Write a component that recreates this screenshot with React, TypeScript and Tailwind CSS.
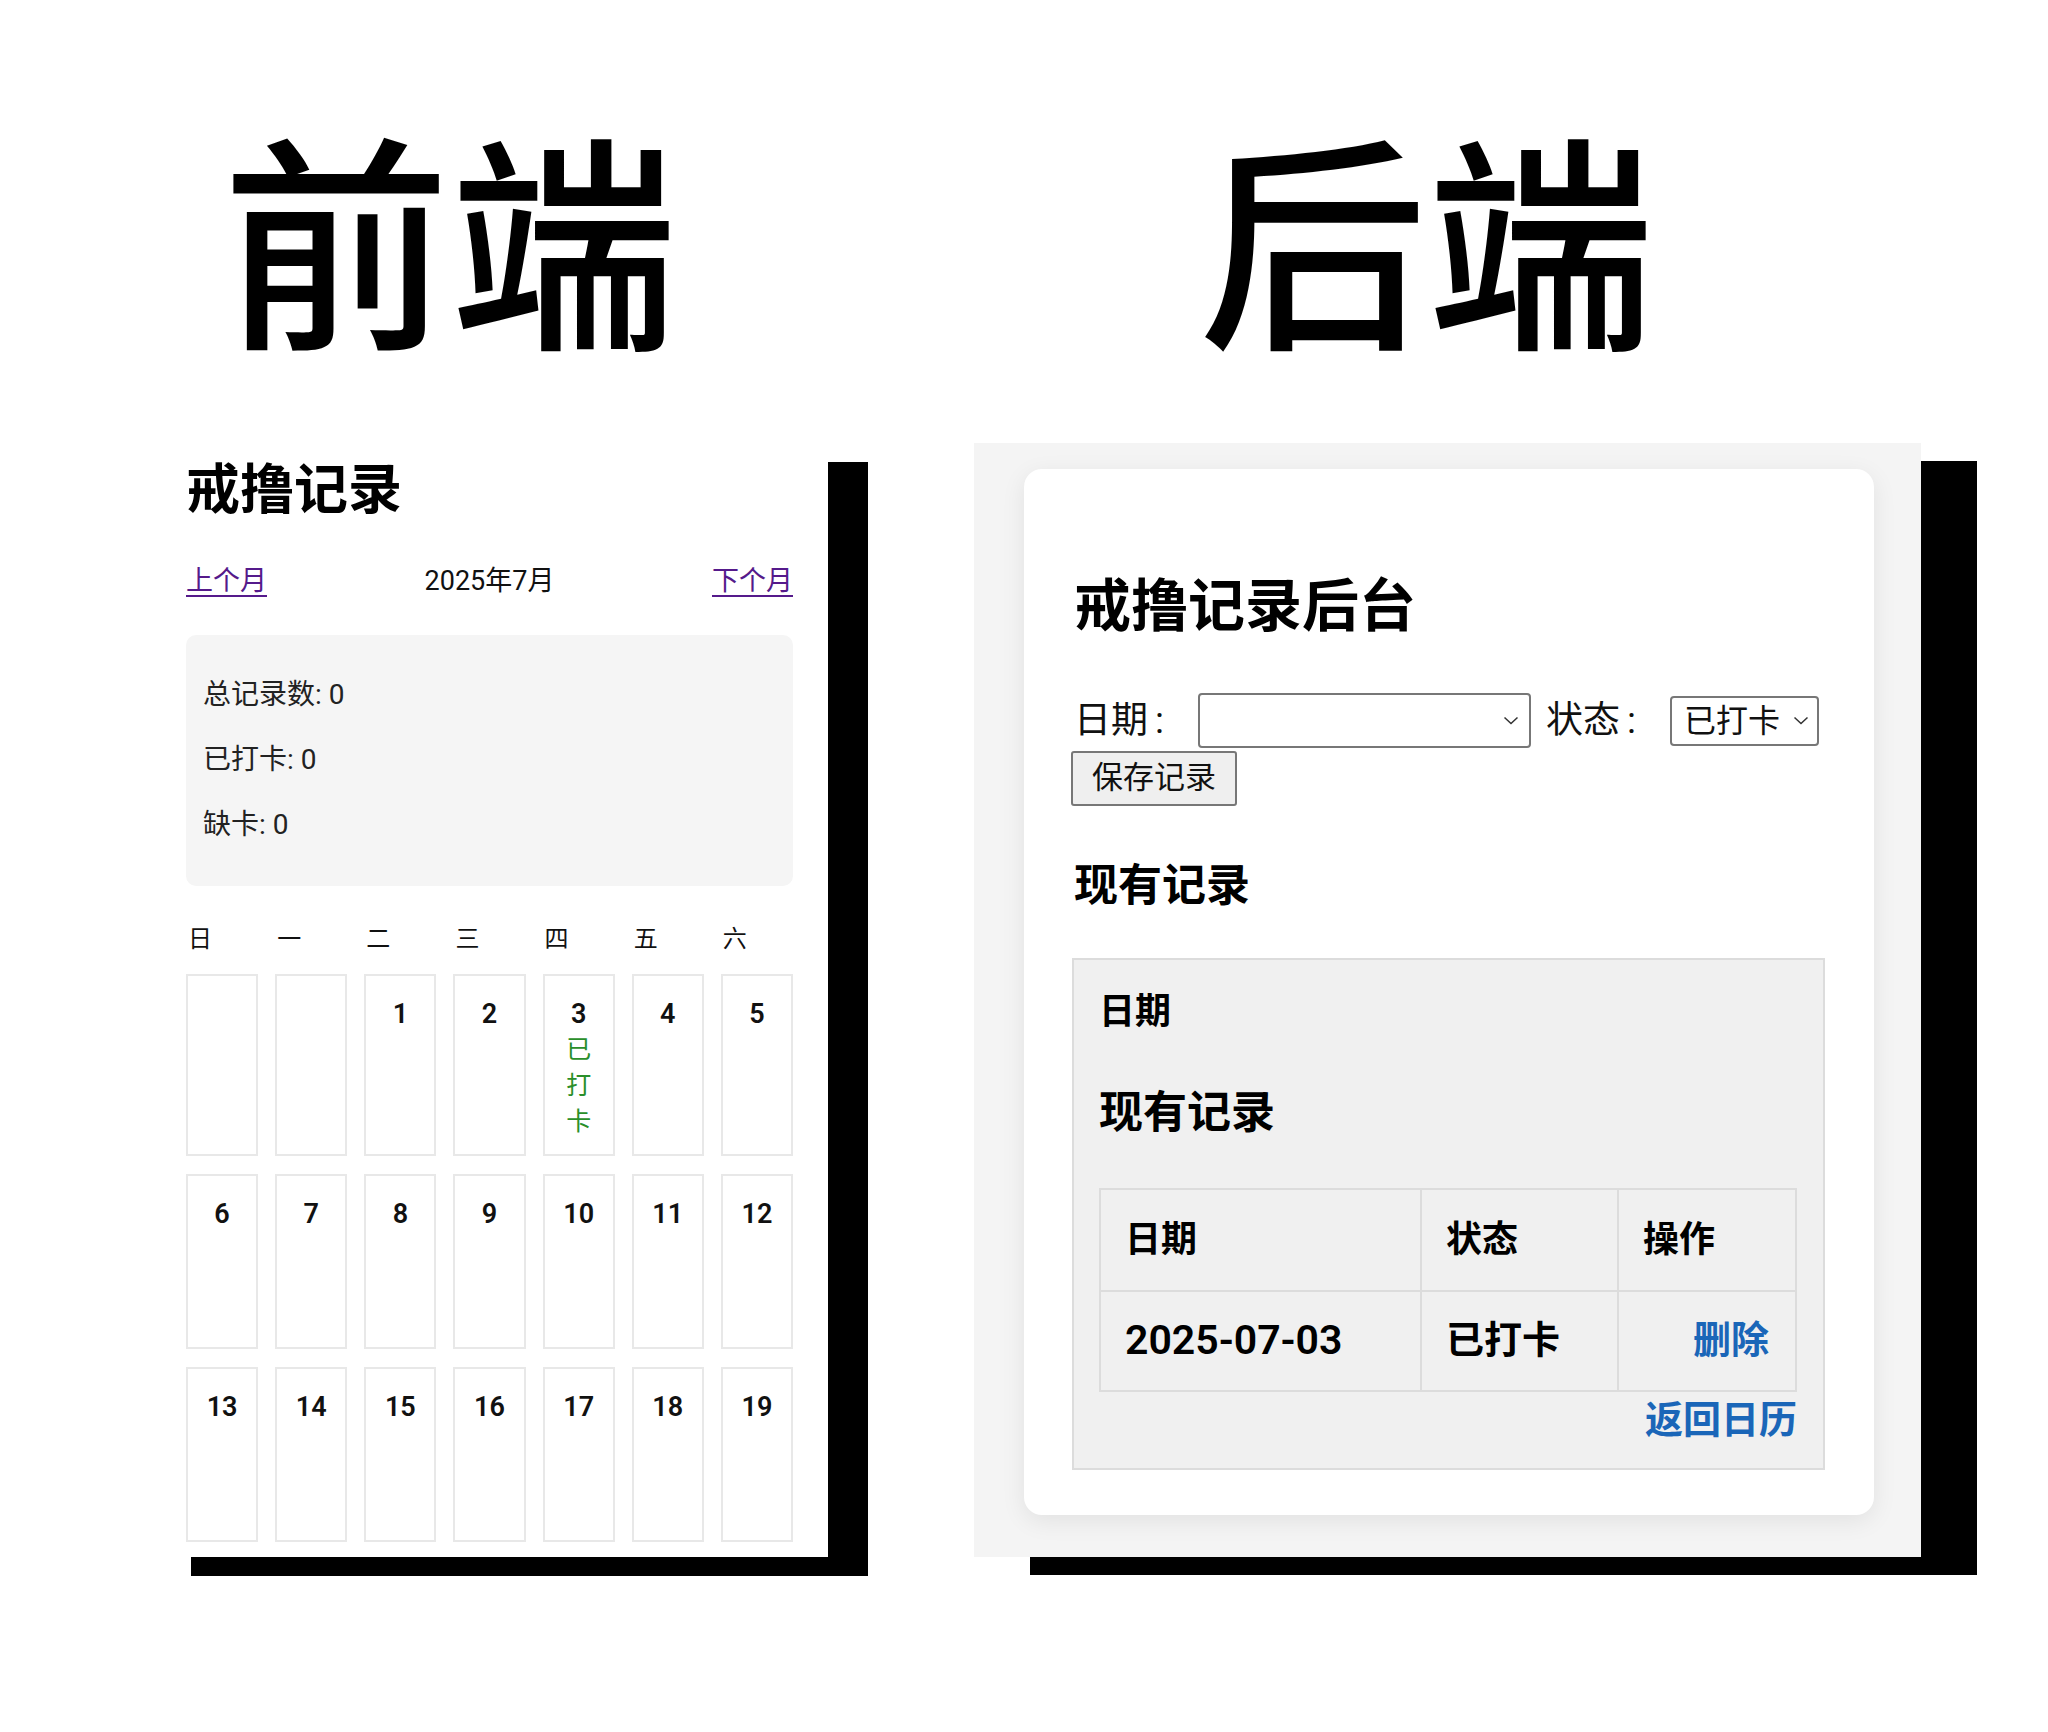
import React from 'react';

const weekdays = ['日', '一', '二', '三', '四', '五', '六'];

const rows: (number | null)[][] = [
  [null, null, 1, 2, 3, 4, 5],
  [6, 7, 8, 9, 10, 11, 12],
  [13, 14, 15, 16, 17, 18, 19],
];

function Chevron() {
  return (
    <svg width="16" height="9" viewBox="0 0 16 9" fill="none" className="shrink-0">
      <path d="M1.5 1.5 L8 7.5 L14.5 1.5" stroke="#333" strokeWidth="1.5" />
    </svg>
  );
}

function CalendarPanel() {
  return (
    <div className="ml-[151px] w-[677px] h-[1114px] bg-white shadow-[40px_19px_0_0_#000] px-[35px] pt-[16px] overflow-hidden">
      <h2 className="text-[54px] leading-[64px] font-bold text-black">戒撸记录</h2>

      {/* month nav */}
      <div className="mt-[38px] flex items-center justify-between text-[27px] leading-[40px]">
        <a href="#" className="text-[#551a8b] underline underline-offset-[5px]">上个月</a>
        <span className="text-[#111]">2025年7月</span>
        <a href="#" className="text-[#551a8b] underline underline-offset-[5px]">下个月</a>
      </div>

      {/* stats */}
      <div className="mt-[34px] h-[251px] rounded-[10px] bg-[#f5f5f5] px-[17px] pt-[40px] flex flex-col gap-[25px] text-[28px] leading-[40px] text-[#222]">
        <p>总记录数: 0</p>
        <p>已打卡: 0</p>
        <p>缺卡: 0</p>
      </div>

      {/* weekday header */}
      <div className="mt-[36px] grid grid-cols-7 gap-x-[17px] text-[24px] leading-[34px] text-[#111]">
        {weekdays.map(d => (
          <div key={d} className="pl-[2px]">{d}</div>
        ))}
      </div>

      {/* days */}
      <div className="mt-[18px] grid grid-cols-7 gap-x-[17px] gap-y-[18px]">
        {rows.flat().map((day, i) => (
          <div
            key={i}
            className="min-h-[175px] border-2 border-[#e8e8e8] pt-[20px] pb-[14px] flex flex-col items-center"
          >
            {day !== null && (
              <div className="text-[27px] leading-[36px] font-semibold text-[#111]">{day}</div>
            )}
            {day === 3 && (
              <div className="flex flex-col items-center text-[25px] leading-[36px] text-[#2a8f2a]">
                <span>已</span>
                <span>打</span>
                <span>卡</span>
              </div>
            )}
          </div>
        ))}
      </div>
    </div>
  );
}

function AdminPanel() {
  return (
    <div className="ml-[146px] w-[947px] h-[1114px] bg-[#f4f4f4] shadow-[56px_18px_0_0_#000] pt-[26px] pl-[50px]">
      <div className="w-[850px] h-[1046px] bg-white rounded-[18px] shadow-[0_6px_24px_rgba(0,0,0,0.08)] pl-[50px] pr-[49px] pt-[105px]">
        <h2 className="text-[57px] leading-[66px] font-bold text-black">戒撸记录后台</h2>

        {/* form */}
        <div className="mt-[53px] flex items-center text-[37px] text-[#111]">
          <span className="mr-[34px]">日期<span className="ml-[7px]">:</span></span>
          <div className="w-[333px] h-[55px] border-2 border-[#777] rounded-[4px] bg-white flex items-center justify-end pr-[10px]">
            <Chevron />
          </div>
          <span className="ml-[15px] mr-[34px]">状态<span className="ml-[7px]">:</span></span>
          <div className="w-[149px] h-[50px] border-2 border-[#777] rounded-[4px] bg-white flex items-center justify-between pl-[12px] pr-[8px] text-[32px]">
            <span>已打卡</span>
            <Chevron />
          </div>
        </div>
        <button className="mt-[2px] -ml-[3px] w-[166px] h-[55px] border-2 border-[#777] rounded-[3px] bg-[#efefef] text-[31px] text-[#111] flex items-center justify-center">
          保存记录
        </button>

        <h3 className="mt-[54px] text-[44px] leading-[52px] font-bold text-black">现有记录</h3>

        {/* records box */}
        <div className="mt-[46px] -ml-[2px] h-[512px] bg-[#f0f0f0] border-2 border-[#dcdcdc] pl-[25px] pt-[30px]">
          <div className="text-[36px] leading-[44px] font-bold text-black">日期</div>
          <div className="mt-[53px] text-[44px] leading-[52px] font-bold text-black">现有记录</div>

          <table className="mt-[49px] w-[698px] border-collapse border-2 border-[#dcdcdc]">
            <thead>
              <tr className="h-[102px]">
                <th className="w-[321px] border-2 border-[#dcdcdc] pl-[24px] text-left text-[36px] font-bold text-black">日期</th>
                <th className="w-[197px] border-2 border-[#dcdcdc] pl-[24px] text-left text-[36px] font-bold text-black">状态</th>
                <th className="border-2 border-[#dcdcdc] pl-[24px] text-left text-[36px] font-bold text-black">操作</th>
              </tr>
            </thead>
            <tbody>
              <tr className="h-[100px]">
                <td className="border-2 border-[#dcdcdc] pl-[24px] text-[41px] font-semibold text-black">2025-07-03</td>
                <td className="border-2 border-[#dcdcdc] pl-[24px] text-[38px] font-bold text-black">已打卡</td>
                <td className="border-2 border-[#dcdcdc] pr-[26px] text-right text-[38px] font-bold text-[#1a66b8]">删除</td>
              </tr>
            </tbody>
          </table>

          <div className="mt-[6px] w-[698px] text-right text-[38px] leading-[44px] font-bold text-[#1a66b8]">返回日历</div>
        </div>
      </div>
    </div>
  );
}

export default function App() {
  return (
    <div className="w-[2048px] h-[1732px] bg-white font-['Roboto','Noto_Sans_CJK_SC',sans-serif]">
      <div className="flex h-[443px]">
        <div className="w-[979px] pl-[222px] pt-[119px]">
          <h1 className="text-[228px] leading-none font-medium text-black font-['Noto_Sans_CJK_SC',sans-serif]">前端</h1>
        </div>
        <div className="pl-[220px] pt-[119px]">
          <h1 className="text-[228px] leading-none font-medium text-black font-['Noto_Sans_CJK_SC',sans-serif]">后端</h1>
        </div>
      </div>
      <div className="flex items-start">
        <CalendarPanel />
        <AdminPanel />
      </div>
    </div>
  );
}
